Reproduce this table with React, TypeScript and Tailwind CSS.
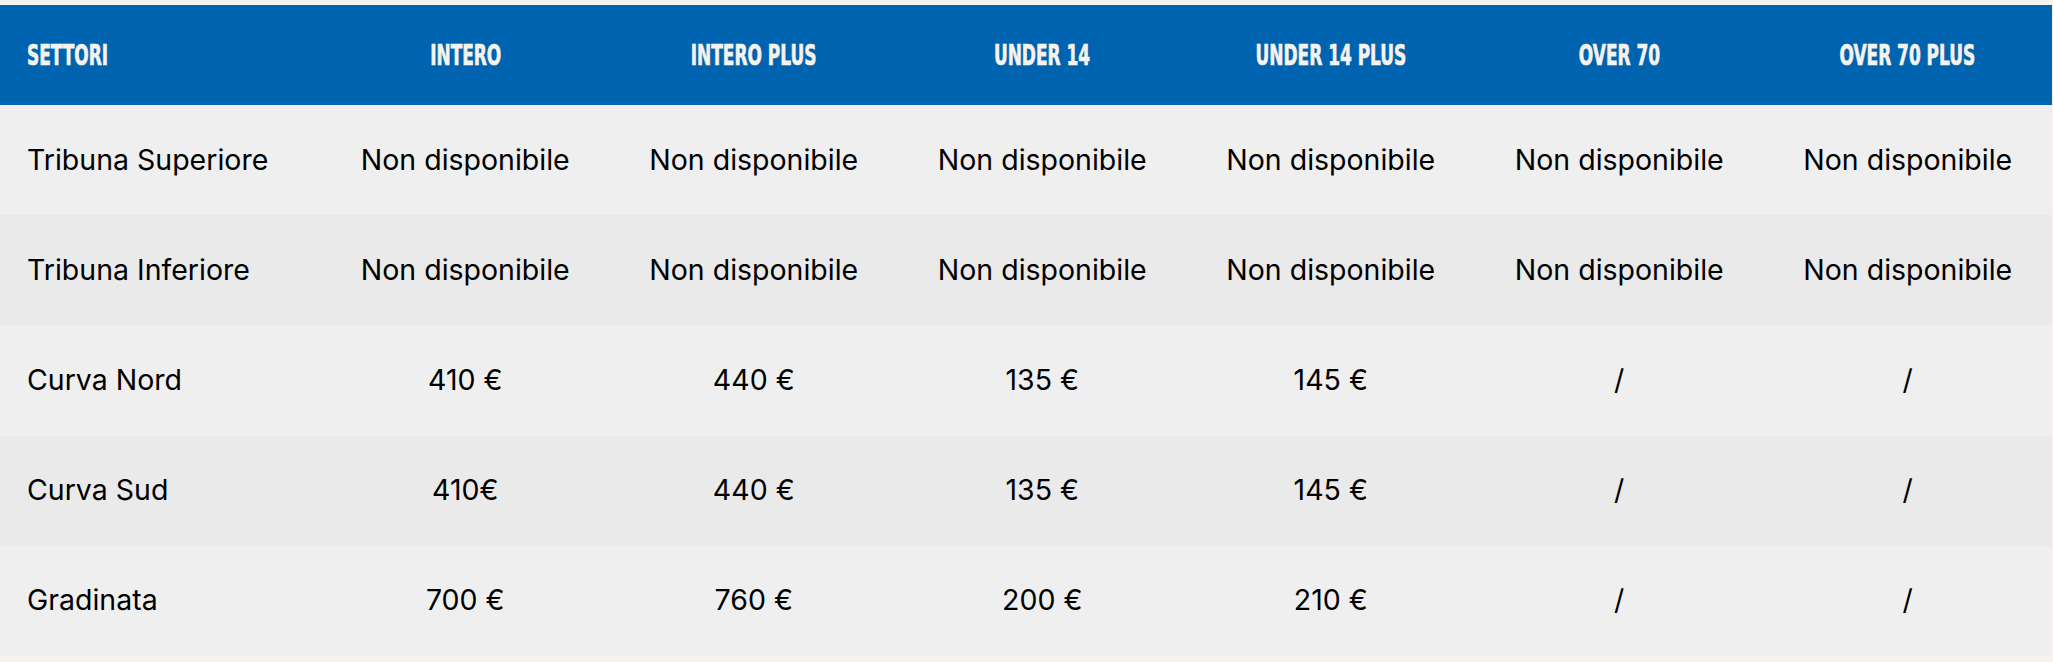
import React from "react";

const headers = ["INTERO", "INTERO PLUS", "UNDER 14", "UNDER 14 PLUS", "OVER 70", "OVER 70 PLUS"];

const rows: [string, string[]][] = [
  ["Tribuna Superiore", Array(6).fill("Non disponibile")],
  ["Tribuna Inferiore", Array(6).fill("Non disponibile")],
  ["Curva Nord", ["410 €", "440 €", "135 €", "145 €", "/", "/"]],
  ["Curva Sud", ["410€", "440 €", "135 €", "145 €", "/", "/"]],
  ["Gradinata", ["700 €", "760 €", "200 €", "210 €", "/", "/"]],
];

export default function App() {
  return (
    <div className="w-[2053px] h-[662px] bg-[#f6f3ee] pt-[5px]">
      <div className="w-[2052px]">
        <div
          className="grid grid-cols-[321px_repeat(6,1fr)] h-[100px] bg-[#0063af] text-[#f6f3ee] items-center font-bold text-[29px] leading-none [-webkit-text-stroke:0.7px_#f6f3ee]"
          style={{ fontFamily: '"DejaVu Sans Condensed", "DejaVu Sans", sans-serif' }}
        >
          <div className="pl-[27px]">
            <span className="inline-block origin-left scale-x-[0.65]">SETTORI</span>
          </div>
          {headers.map((h) => (
            <div key={h} className="text-center">
              <span className="inline-block origin-center scale-x-[0.65] whitespace-nowrap">{h}</span>
            </div>
          ))}
        </div>
        {rows.map(([name, vals], i) => (
          <div
            key={name}
            className={`grid grid-cols-[321px_repeat(6,1fr)] h-[110.2px] items-center text-[28.5px] text-black ${
              i % 2 === 0 ? "bg-[#efefef]" : "bg-[#eaeaea]"
            }`}
            style={{ fontFamily: 'Inter, "Noto Sans", sans-serif' }}
          >
            <div className="pl-[27px] whitespace-nowrap">{name}</div>
            {vals.map((v, j) => (
              <div key={j} className="text-center whitespace-nowrap">
                {v}
              </div>
            ))}
          </div>
        ))}
      </div>
    </div>
  );
}
